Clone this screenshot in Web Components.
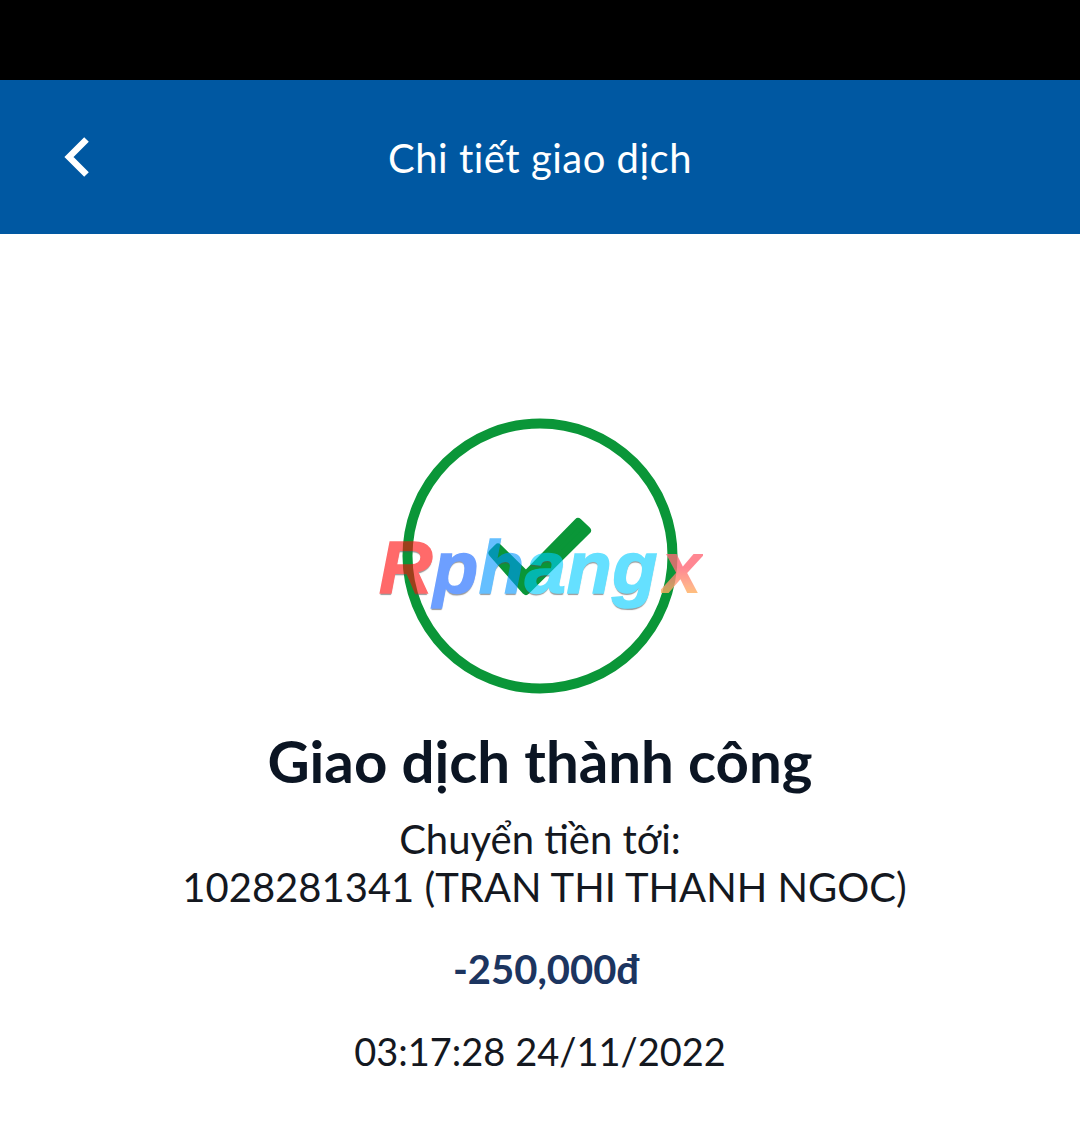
<!DOCTYPE html>
<html lang="vi">
<head>
<meta charset="utf-8">
<title>Chi tiết giao dịch</title>
<style>
  html, body { margin: 0; background: #fff; }
  body { font-family: Lato, "Noto Sans", sans-serif; width: 1080px; height: 1147px; overflow: hidden; }
</style>
</head>
<body>
<tx-page>
  <app-bar>Chi tiết giao dịch</app-bar>
  <tx-result>
    <span slot="title">Giao dịch thành công</span>
    <span slot="target">Chuyển tiền tới:<br><span style="margin-left: 9px">1028281341 (TRAN THI THANH NGOC)</span></span>
    <span slot="amount">-250,000đ</span>
    <span slot="time">03:17:28 24/11/2022</span>
  </tx-result>
</tx-page>
<script>
/* globals HTMLElement */

class TxPage extends HTMLElement {
  constructor () {
    super()
    this.attachShadow({ mode: 'open' }).innerHTML = `
      <style>
        :host { display: flex; flex-direction: column; }
        .status { height: 80px; background: #000; }
      </style>
      <div class="status"></div>
      <slot></slot>
    `
  }
}

class AppBar extends HTMLElement {
  constructor () {
    super()
    this.attachShadow({ mode: 'open' }).innerHTML = `
      <style>
        :host {
          display: grid;
          grid-template-columns: 1fr auto 1fr;
          align-items: center;
          height: 154px;
          background: #0058a2;
          color: #fff;
          font-size: 40px;
          letter-spacing: .5px;
        }
        svg { display: block; margin-left: 62px; }
        .title { position: relative; top: 1px; }
      </style>
      <svg width="30" height="42" viewBox="0 0 30 42">
        <polyline points="24.5,3.5 7,21 24.5,38.5" fill="none" stroke="#fff" stroke-width="6.5"/>
      </svg>
      <div class="title"><slot></slot></div>
      <div></div>
    `
  }
}

class StatusIcon extends HTMLElement {
  constructor () {
    super()
    this.attachShadow({ mode: 'open' }).innerHTML = `
      <style>
        :host { display: block; position: relative; width: 280px; height: 280px; }
        svg { display: block; }
        .mark {
          position: absolute;
          left: -21px;
          top: 112px;
          font: italic bold 74px/80px "Liberation Sans", sans-serif;
          white-space: nowrap;
          letter-spacing: .6px;
        }
        .mark span {
          opacity: .6;
          -webkit-text-stroke: 1.5px currentcolor;
          text-shadow: 0 2px 1px #555;
        }
        .r { color: #ff0808; }
        .p { color: #0d61ff; }
        .h { color: #0096ff; }
        .c { color: #00cdff; }
        .mark .x {
          opacity: .8;
          color: transparent;
          -webkit-text-stroke: 0;
          text-shadow: none;
          margin-left: 3px;
          background: linear-gradient(to bottom, #ff6a78 0%, #ff6a78 50%, #ff9f70 72%, #ffc04a 90%);
          -webkit-background-clip: text;
          background-clip: text;
        }
      </style>
      <svg width="280" height="280" viewBox="0 0 280 280">
        <circle cx="140" cy="140" r="132.5" fill="none" stroke="#0a9638" stroke-width="10"/>
        <polygon points="92.5,137 98,131.5 126,159 178,106 187,114.5 126,175" fill="#0a9638" stroke="#0a9638" stroke-width="8" stroke-linejoin="round"/>
      </svg>
      <div class="mark"><span class="r">R</span><span class="p">p</span><span class="h">h</span><span class="c">ang</span><span class="x">x</span></div>
    `
  }
}

class TxResult extends HTMLElement {
  constructor () {
    super()
    this.attachShadow({ mode: 'open' }).innerHTML = `
      <style>
        :host {
          display: flex;
          flex-direction: column;
          align-items: center;
          padding-top: 182px;
          text-align: center;
          color: #14181f;
          font-size: 40px;
          line-height: 48px;
        }
        .title { margin-top: 27px; font-size: 58.2px; line-height: 76px; font-weight: 700; color: #0b1523; }
        .target { margin-top: 16px; }
        .amount { margin-top: 34px; padding-left: 12px; font-weight: 700; color: #1c3560; }
        .time { margin-top: 34px; font-size: 38px; }
      </style>
      <status-icon></status-icon>
      <div class="title"><slot name="title"></slot></div>
      <div class="target"><slot name="target"></slot></div>
      <div class="amount"><slot name="amount"></slot></div>
      <div class="time"><slot name="time"></slot></div>
    `
  }
}

window.customElements.define('tx-page', TxPage)
window.customElements.define('app-bar', AppBar)
window.customElements.define('status-icon', StatusIcon)
window.customElements.define('tx-result', TxResult)
</script>
</body>
</html>
